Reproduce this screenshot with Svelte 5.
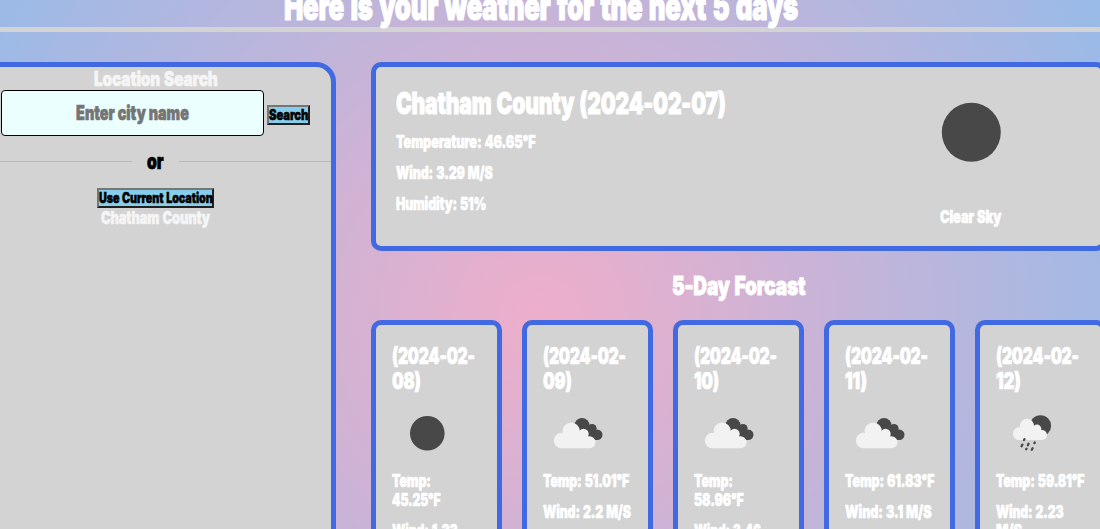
<script>
  const forecast = [
    { date: [['(2024-02-', 83], ['08)', 28.5]], icon: 'clear', temp: [['Temp:', 39], ['45.25°F', 48.5]], wind: [['Wind: 1.33', 66], ['M/S', 26]] },
    { date: [['(2024-02-', 83], ['09)', 28.5]], icon: 'clouds', temp: [['Temp: 51.01°F', 86]], wind: [['Wind: 2.2 M/S', 88]] },
    { date: [['(2024-02-', 83], ['10)', 25]], icon: 'clouds', temp: [['Temp:', 39], ['58.96°F', 49.5]], wind: [['Wind: 3.46', 67], ['M/S', 26]] },
    { date: [['(2024-02-', 83], ['11)', 22]], icon: 'clouds', temp: [['Temp: 61.83°F', 89]], wind: [['Wind: 3.1 M/S', 86.5]] },
    { date: [['(2024-02-', 83], ['12)', 25]], icon: 'rain', temp: [['Temp: 59.81°F', 88.5]], wind: [['Wind: 2.23', 67.5], ['M/S', 26]] }
  ];

  // Condenses a line of text horizontally to the given width.
  function fit(node, width) {
    node.style.transform = `scaleX(${width / node.offsetWidth})`;
  }
</script>

{#snippet line(text, width)}
  <span class="line" style="width: {width}px"><span class="ink" use:fit={width}>{text}</span></span>
{/snippet}

<div class="page">
  <header><h1>{@render line('Here is your weather for the next 5 days', 514)}</h1></header>
  <main>
    <aside>
      <h3>{@render line('Location Search', 123.5)}</h3>
      <form onsubmit={(e) => e.preventDefault()}>
        <label class="field"><input placeholder="Enter city name" /></label>
        <button class="search">{@render line('Search', 39)}</button>
      </form>
      <div class="or"><i></i>{@render line('or', 16.5)}<i></i></div>
      <button class="current">{@render line('Use Current Location', 113.5)}</button>
      <p class="place">{@render line('Chatham County', 108.5)}</p>
    </aside>
    <section class="results">
      <article class="today">
        <div>
          <h2>{@render line('Chatham County (2024-02-07)', 330)}</h2>
          <p>{@render line('Temperature: 46.65°F', 139.5)}</p>
          <p>{@render line('Wind: 3.29 M/S', 97)}</p>
          <p>{@render line('Humidity: 51%', 90.5)}</p>
        </div>
        <div class="sky">
          <svg width="120" height="120" viewBox="0 0 120 120"><circle cx="60.3" cy="60.3" r="29.5" fill="#484849" /></svg>
          <p>{@render line('Clear Sky', 61.5)}</p>
        </div>
      </article>
      <h2 class="title">{@render line('5-Day Forcast', 133.5)}</h2>
      <div class="days">
        {#each forecast as day}
          <article class="day">
            <h3>{#each day.date as [t, w]}{@render line(t, w)}{/each}</h3>
            <svg width="70" height="70" viewBox="0 0 70 70">
              {#if day.icon === 'clear'}
                <circle cx="35.3" cy="35.3" r="17.3" fill="#484849" />
              {:else if day.icon === 'clouds'}
                <g fill="#484849"><circle cx="39" cy="27.5" r="7.6" /><circle cx="49" cy="30.5" r="4.6" /><circle cx="54.2" cy="36.7" r="5.3" /><path d="M35 28 49 28 54 42 42 40Z" /></g>
                <g fill="#f2f2f2"><circle cx="28.2" cy="33" r="8.6" /><circle cx="40.5" cy="36" r="5.2" /><circle cx="18.5" cy="42.5" r="7.7" /><circle cx="46.5" cy="44.2" r="6" /><path d="M18 35H40L46 39V50.2H18Z" /></g>
              {:else}
                <circle cx="44.5" cy="27.8" r="10.6" fill="#484849" />
                <g fill="#f2f2f2"><circle cx="31" cy="28" r="7.2" /><circle cx="41" cy="31" r="4.4" /><circle cx="23.3" cy="35.6" r="6.4" /><circle cx="46" cy="37" r="5" /><path d="M23 30H41L46 33V42H23Z" /></g>
                <path d="M28.5 41.2l-.5.8M26.4 46.6l-.8 1.6M32.6 45.7l-.8 1.6M38.8 44.4l-.4.7M30.6 50.6l-.4.6M36.6 50.2l-.8 1.6" stroke="#484849" stroke-width="2.3" stroke-linecap="round" />
              {/if}
            </svg>
            <p>{#each day.temp as [t, w]}{@render line(t, w)}{/each}</p>
            <p>{#each day.wind as [t, w]}{@render line(t, w)}{/each}</p>
          </article>
        {/each}
      </div>
    </section>
  </main>
</div>

<style>
  :global(body) { margin: 0; overflow: hidden; }
  * { box-sizing: border-box; }
  h1, h2, h3, p { margin: 0; }
  .page {
    width: 1125px; height: 529px; margin-left: -25px; overflow: hidden;
    font-family: Inter, "Liberation Sans", sans-serif; font-weight: 900; color: #fff;
    background: radial-gradient(circle at 565px 317px, rgb(238, 174, 202) 0%, rgb(148, 187, 233) 675px);
  }
  .line { display: block; white-space: nowrap; }
  .ink { display: inline-block; transform-origin: 0 50%; -webkit-text-stroke: .032em currentColor; letter-spacing: -.01em; word-spacing: .06em; }
  header { width: 1131px; height: 32px; border-bottom: 5px solid lightgray; display: flex; justify-content: center; }
  h1 { font-size: 38px; line-height: 40px; margin-top: -14px; font-weight: 900; }
  main { width: 1131px; display: flex; gap: 35px; padding-top: 30px; }
  aside {
    width: 361px; height: 620px; background: lightgray; border: 5px solid royalblue; border-radius: 20px;
    display: flex; flex-direction: column; align-items: center; color: #f5f5f5;
  }
  h2, h3 { font-weight: 900; }
  aside h3 { font-size: 20px; line-height: 24px; height: 23px; }
  form { display: flex; align-items: center; gap: 3px; }
  .field { width: 263px; height: 46px; border: 1px solid #000; border-radius: 4px; background: #ebffff; overflow: hidden; }
  input {
    width: 363px; height: 44px; border: 0; padding: 0; background: transparent; outline: 0;
    font: 900 20px Inter, sans-serif; text-align: center; transform: scaleX(.719); transform-origin: 0 50%;
  }
  input::placeholder { color: #757575; -webkit-text-stroke: .7px #757575; }
  button {
    height: 20px; padding: 0; border: 2px solid; border-color: #767676 #212121 #212121 #767676; background: skyblue;
    font: 900 14.5px/16px Inter, sans-serif; color: #000;
  }
  .search { margin-top: 4px; }
  .or { align-self: stretch; display: flex; align-items: center; gap: 15.5px; height: 52px; font-size: 21px; line-height: 50px; color: #000; }
  .or i { flex: 1; height: 1px; margin-bottom: 2px; background: #b9b9b9; }
  .place { font-size: 17px; line-height: 20px; }
  .results { width: 735px; }
  .today { height: 189px; padding: 20px; display: flex; justify-content: space-between; background: lightgray; border: 5px solid royalblue; border-radius: 10px; }
  .today h2 { font-size: 30px; line-height: 34px; margin-bottom: 12px; margin-top: -1px; }
  .today p { font-size: 17.5px; line-height: 19px; margin-bottom: 12px; }
  .sky { width: 120px; margin-right: 50px; margin-top: -15px; display: flex; flex-direction: column; align-items: center; }
  .sky svg { margin-bottom: 15px; flex: none; }
  .title { font-size: 26px; line-height: 30px; margin: 20px auto 19px; width: 133.5px; }
  .days { display: flex; gap: 20px; }
  .day { width: 131px; flex: none; height: 320px; padding: 19px 16px; background: lightgray; border: 5px solid royalblue; border-radius: 10px; }
  .day h3 { font-size: 23px; line-height: 25px; margin-bottom: 4px; }
  .day svg { display: block; margin-bottom: 3px; }
  .day p { font-size: 17.5px; line-height: 19px; margin-bottom: 12px; }
</style>
